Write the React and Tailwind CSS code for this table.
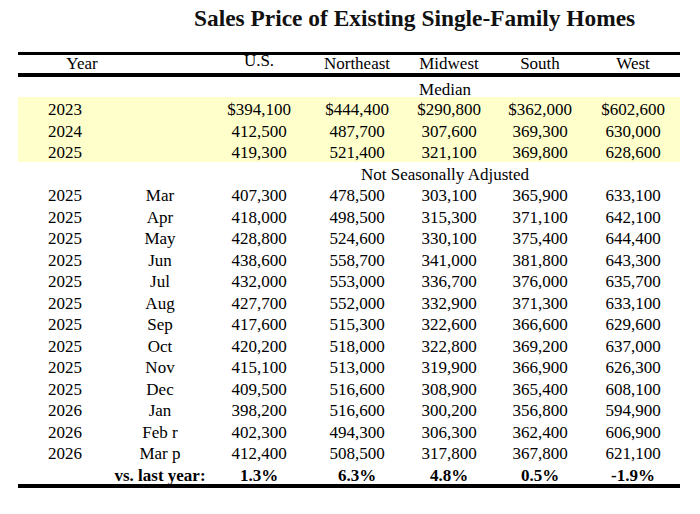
import React from 'react';

const cols = 'grid grid-cols-[94px_96px_102px_94px_90px_92px_94px] items-center text-center';

const annual = [
  ['2023', '$394,100', '$444,400', '$290,800', '$362,000', '$602,600'],
  ['2024', '412,500', '487,700', '307,600', '369,300', '630,000'],
  ['2025', '419,300', '521,400', '321,100', '369,800', '628,600'],
];

const monthly = [
  ['2025', 'Mar', '407,300', '478,500', '303,100', '365,900', '633,100'],
  ['2025', 'Apr', '418,000', '498,500', '315,300', '371,100', '642,100'],
  ['2025', 'May', '428,800', '524,600', '330,100', '375,400', '644,400'],
  ['2025', 'Jun', '438,600', '558,700', '341,000', '381,800', '643,300'],
  ['2025', 'Jul', '432,000', '553,000', '336,700', '376,000', '635,700'],
  ['2025', 'Aug', '427,700', '552,000', '332,900', '371,300', '633,100'],
  ['2025', 'Sep', '417,600', '515,300', '322,600', '366,600', '629,600'],
  ['2025', 'Oct', '420,200', '518,000', '322,800', '369,200', '637,000'],
  ['2025', 'Nov', '415,100', '513,000', '319,900', '366,900', '626,300'],
  ['2025', 'Dec', '409,500', '516,600', '308,900', '365,400', '608,100'],
  ['2026', 'Jan', '398,200', '516,600', '300,200', '356,800', '594,900'],
  ['2026', 'Feb r', '402,300', '494,300', '306,300', '362,400', '606,900'],
  ['2026', 'Mar p', '412,400', '508,500', '317,800', '367,800', '621,100'],
];

const change = ['1.3%', '6.3%', '4.8%', '0.5%', '-1.9%'];

function Row({ cells, className = 'h-[21.5px]' }) {
  return (
    <div className={`${cols} ${className}`}>
      {cells.map((cell, i) => (
        <div key={i} className="whitespace-nowrap">{cell}</div>
      ))}
    </div>
  );
}

export default function App() {
  return (
    <div className="w-[700px] h-[514px] bg-white font-['Liberation_Serif',serif] text-[17px] text-black">
      <h1 className="pt-[4px] pl-[194px] text-[23.4px] leading-[28px] font-bold text-[#111]">
        Sales Price of Existing Single-Family Homes
      </h1>

      <div className="mt-[20px] ml-[18px] w-[662px] border-t-[3px] border-black">
        {/* column headings */}
        <div className="grid grid-cols-[94px_96px_102px_94px_90px_92px_94px] grid-rows-[18px] items-start text-center h-[18px] box-content border-b-[4px] border-black leading-[18px]">
          <div className="pl-[34px]">Year</div>
          <div />
          <div className="leading-[12px]">U.S.</div>
          <div>Northeast</div>
          <div>Midwest</div>
          <div>South</div>
          <div>West</div>
        </div>

        <div className={`${cols} h-[20px]`}>
          <div className="col-start-4 col-span-3 pr-[6px]">Median</div>
        </div>

        <div className="bg-[#ffffcc]">
          {annual.map((r) => (
            <Row key={r[0]} cells={[r[0], '', ...r.slice(1)]} />
          ))}
        </div>

        <div className={`${cols} h-[21.5px]`}>
          <div className="col-start-4 col-span-3 pr-[6px] whitespace-nowrap">Not Seasonally Adjusted</div>
        </div>

        {monthly.map((r, i) => (
          <Row key={i} cells={r} />
        ))}

        <Row className="h-[21px] font-bold" cells={['', 'vs. last year:', ...change]} />

        <div className="border-t-[4px] border-black" />
      </div>
    </div>
  );
}
